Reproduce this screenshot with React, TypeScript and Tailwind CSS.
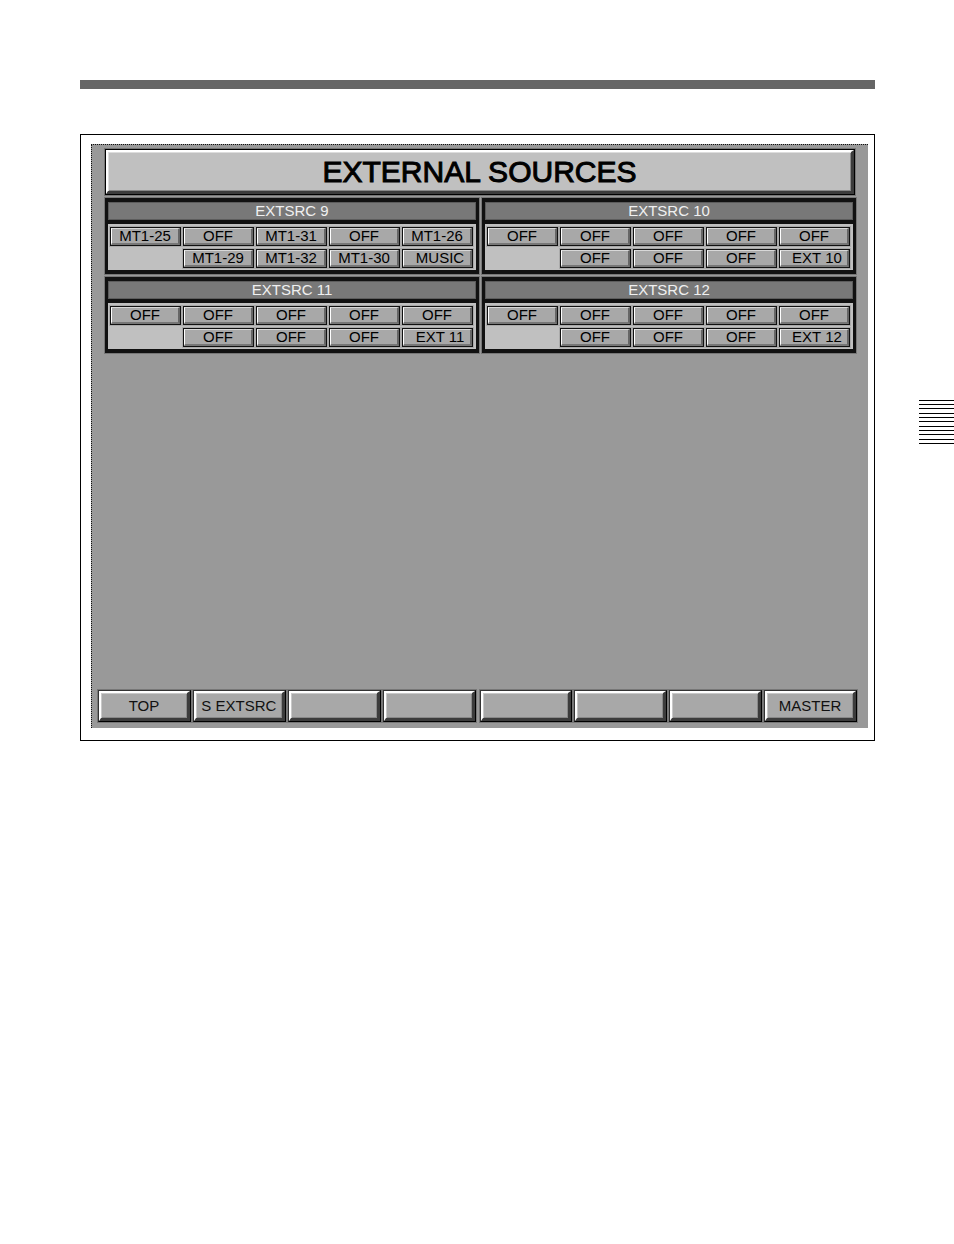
type Source = {
    name: string;
    top: string[];
    bottom: string[];
};

const sources: Source[] = [
    {
        name: "EXTSRC 9",
        top: ["MT1-25", "OFF", "MT1-31", "OFF", "MT1-26"],
        bottom: ["MT1-29", "MT1-32", "MT1-30", "MUSIC"],
    },
    {
        name: "EXTSRC 10",
        top: ["OFF", "OFF", "OFF", "OFF", "OFF"],
        bottom: ["OFF", "OFF", "OFF", "EXT 10"],
    },
    {
        name: "EXTSRC 11",
        top: ["OFF", "OFF", "OFF", "OFF", "OFF"],
        bottom: ["OFF", "OFF", "OFF", "EXT 11"],
    },
    {
        name: "EXTSRC 12",
        top: ["OFF", "OFF", "OFF", "OFF", "OFF"],
        bottom: ["OFF", "OFF", "OFF", "EXT 12"],
    },
];

const menuGroups = [
    ["TOP", "S EXTSRC", "", ""],
    ["", "", "", "MASTER"],
];

// lines per group in the page edge mark
const edgeMark = [3, 3, 3, 2];

function SourceButton({ label, last }: { label: string; last?: boolean }) {
    return (
        <button className="h-[19px] min-w-0 border border-[#111] bg-[#a8a8a8] shadow-[0_0_0_1px_#aaa]">
            <span
                className={`flex h-full items-center justify-center border-t border-r-2 border-b-2 border-l border-t-[#d8d8d8] border-r-[#666] border-b-[#777] border-l-white text-[15px] leading-[14px] whitespace-nowrap ${last ? "pl-1.5" : ""}`}
            >
                {label}
            </span>
        </button>
    );
}

function SourcePanel({ source }: { source: Source }) {
    return (
        <section className="border-x-3 border-y-4 border-[#111] shadow-[0_0_0_1px_#777]">
            <h2 className="h-[18px] border border-[#5c5c5c] bg-[#787878] text-center text-[15px] leading-4 text-[#f0f0f0]">
                {source.name}
            </h2>
            <div className="grid grid-cols-5 gap-x-0.5 gap-y-[3px] border-t-4 border-[#111] bg-[#c0c0c0] pt-[3px] pr-[3px] pb-0.5 pl-0.5">
                {source.top.map((label, i) => (
                    <SourceButton key={i} label={label} />
                ))}
                <div />
                {source.bottom.map((label, i) => (
                    <SourceButton key={i} label={label} last={i === 3} />
                ))}
            </div>
        </section>
    );
}

function MenuButton({ label }: { label: string }) {
    return (
        <button
            aria-label={label || "Unassigned"}
            className="h-8 min-w-0 flex-1 border border-t-[#333] border-r-black border-b-black border-l-[#333] bg-[#a8a8a8] shadow-[0_0_0_1px_#777]"
        >
            <span className="flex h-full items-center justify-center border-t-2 border-r-3 border-b-3 border-l-2 border-t-white border-r-[#3c3c3c] border-b-[#3c3c3c] border-l-white text-[15px] leading-[15px] whitespace-nowrap text-[#111] shadow-[inset_1px_1px_0_#c8c8c8,inset_-1px_-1px_0_#888]">
                {label}
            </span>
        </button>
    );
}

export default function App() {
    return (
        <div className="min-h-screen bg-white pt-20 pl-20 font-['Liberation_Sans',Arial,sans-serif] text-black">
            <div className="mr-[79px] h-[9px] bg-[#666]" />
            <div className="mt-[45px] flex items-start gap-11">
                <main className="min-w-0 flex-1 border border-black pt-[9px] pr-1.5 pb-3 pl-2.5">
                    <div className="flex min-h-[584px] flex-col border-t border-l border-dotted border-[#111] bg-[#999]">
                        <div className="pt-1 pr-3 pl-[13px]">
                            <div className="mr-px h-[46px] border border-black bg-[#c0c0c0] shadow-[0_0_0_1px_#777]">
                                <h1 className="flex h-full items-center justify-center border-t-2 border-r-3 border-b-3 border-l-2 border-t-white border-r-[#3c3c3c] border-b-[#3c3c3c] border-l-white text-[30px] leading-8 whitespace-nowrap shadow-[inset_1px_1px_0_#ddd,inset_-1px_-1px_0_#888] [-webkit-text-stroke:1px_black]">
                                    EXTERNAL SOURCES
                                </h1>
                            </div>
                            <div className="mt-[3px] grid grid-cols-2 gap-[3px]">
                                {sources.map((source) => (
                                    <SourcePanel key={source.name} source={source} />
                                ))}
                            </div>
                        </div>
                        <nav className="mt-auto flex gap-1 pr-[11px] pb-1.5 pl-1.5">
                            {menuGroups.map((group, i) => (
                                <div key={i} className="flex flex-1 gap-0.5">
                                    {group.map((label, j) => (
                                        <MenuButton key={j} label={label} />
                                    ))}
                                </div>
                            ))}
                        </nav>
                    </div>
                </main>
                <aside className="mt-[266px] flex w-[35px] shrink-0 flex-col gap-1">
                    {edgeMark.map((count, i) => (
                        <div key={i} className="flex flex-col gap-[3px]">
                            {Array.from({ length: count }, (_, j) => (
                                <div key={j} className="h-px bg-black" />
                            ))}
                        </div>
                    ))}
                </aside>
            </div>
        </div>
    );
}
